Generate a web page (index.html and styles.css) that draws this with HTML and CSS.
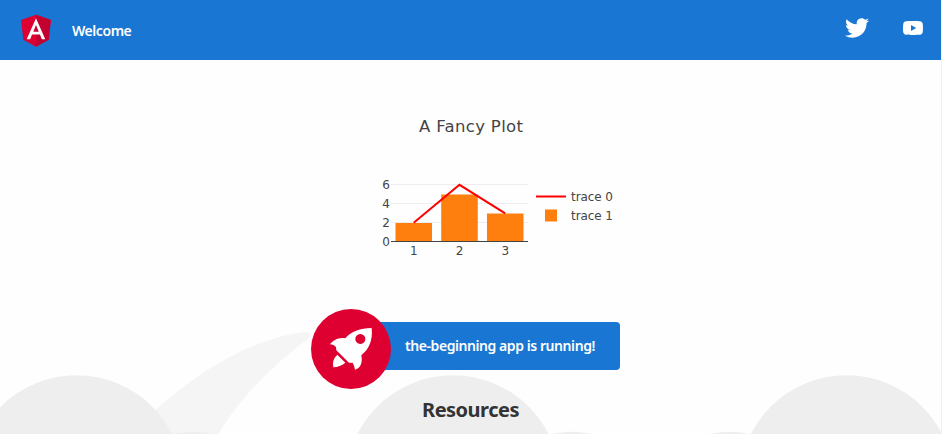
FILE: index.html
```html
<!DOCTYPE html>
<html lang="en">
<head>
<meta charset="utf-8">
<title>Welcome</title>
<link rel="stylesheet" href="styles.css">
</head>
<body>
<div class="page">
  <svg class="scenery" viewBox="0 300 941 134" aria-hidden="true">
    <path fill="#f5f5f5" d="M130 434 C175 389 235 342 302 332.2 Q310 331.400 310.700 335 Q310 338 300 345 C268 370 240 398 218.500 434 Z"/>
    <g fill="#eee">
      <circle cx="194" cy="520" r="88.200"/>
      <circle cx="572" cy="520" r="88.200"/>
      <circle cx="730" cy="520" r="88.200"/>
      <circle cx="76.500" cy="482.500" r="107.200"/>
      <circle cx="453" cy="482.500" r="107.200"/>
      <circle cx="846.500" cy="482.500" r="107.200"/>
    </g>
  </svg>

  <header class="toolbar">
    <svg class="logo" viewBox="0 0 250 250">
      <path fill="#dd0031" d="M125 30 31.900 63.200 46.100 186.300 125 230 203.900 186.300 218.100 63.200z"/>
      <path fill="#c3002f" d="M125 30V230L203.900 186.300 218.100 63.200z"/>
      <path fill="#fff" d="M125 52.100 66.800 182.600H88.500L100.200 153.400H149.600L161.300 182.600H183zM142 135.400H108L125 94.500z"/>
    </svg>
    <span class="welcome">Welcome</span>
    <nav class="social">
      <svg viewBox="0 0 24 24"><path d="M24 4.557c-.883.392-1.832.656-2.828.775 1.017-.609 1.798-1.574 2.165-2.724-.951.564-2.005.974-3.127 1.195-.897-.957-2.178-1.555-3.594-1.555-3.179 0-5.515 2.966-4.797 6.045-4.091-.205-7.719-2.165-10.148-5.144-1.290 2.213-.669 5.108 1.523 6.574-.806-.026-1.566-.247-2.229-.616-.054 2.281 1.581 4.415 3.949 4.890-.693.188-1.452.232-2.224.084.626 1.956 2.444 3.379 4.600 3.419-2.070 1.623-4.678 2.348-7.290 2.040 2.179 1.397 4.768 2.212 7.548 2.212 9.142 0 14.307-7.721 13.995-14.646.962-.695 1.797-1.562 2.457-2.549z"/></svg>
      <svg viewBox="0 0 24 24"><path d="M21.580 7.190c-.23-.86-.91-1.540-1.770-1.770C18.250 5 12 5 12 5s-6.250 0-7.810.42c-.86.23-1.540.91-1.770 1.770C2 8.750 2 12 2 12s0 3.250.42 4.810c.23.86.91 1.540 1.770 1.770C5.750 19 12 19 12 19s6.250 0 7.810-.42c.86-.23 1.540-.91 1.770-1.770C22 15.250 22 12 22 12s0-3.250-.42-4.810zM10 15V9l5.200 3-5.200 3z"/></svg>
    </nav>
  </header>

  <main class="content">
    <svg class="plot" viewBox="311 100 320 170">
      <text class="plot-title" x="471" y="132" text-anchor="middle" textLength="104">A Fancy Plot</text>
      <path stroke="#eee" d="M391 184.500H528M391 203.500H528M391 222.500H528"/>
      <g fill="#ff7f0e">
        <path d="M395.500 223h36.500v18.500h-36.500zM441.200 194.500h36.600v47h-36.600zM487 213.500h36.500v28H487zM545 209.500h12v12h-12z"/>
      </g>
      <path stroke="#444" d="M391 241.500H528"/>
      <path fill="none" stroke="red" stroke-width="2" d="M413.700 222.700 459.500 184.800 505.200 213.300M536 196.500H566"/>
      <g class="ticks">
        <text x="390" y="189" text-anchor="end">6</text>
        <text x="390" y="208" text-anchor="end">4</text>
        <text x="390" y="227" text-anchor="end">2</text>
        <text x="390" y="246" text-anchor="end">0</text>
        <text x="413.700" y="255" text-anchor="middle">1</text>
        <text x="459.500" y="255" text-anchor="middle">2</text>
        <text x="505.200" y="255" text-anchor="middle">3</text>
        <text x="571" y="201" textLength="42">trace 0</text>
        <text x="571" y="220" textLength="42">trace 1</text>
      </g>
    </svg>

    <div class="banner">
      <svg class="rocket" viewBox="33 27 240 240">
        <circle cx="153" cy="147" r="120" fill="#dd0031"/>
        <g fill="#fff">
          <path fill-rule="evenodd" d="M215 84C181 84 151 96 136 115C116 111 99 121 90 133Q103 134 108 142L109 151L147 188L158 188Q163 197 165 209C180 205 189 191 184 166C207 147 219 122 215 84ZM181 102a15 15 0 1 0 .1 0z"/>
          <path d="M112 164 136 188Q120 201 100 202Q95 180 112 164Z"/>
        </g>
      </svg>
      <span class="running">the-beginning app is running!</span>
    </div>
    <h2 class="resources">Resources</h2>
  </main>
</div>
</body>
</html>
```
FILE: styles.css
```css
body {
  margin: 0;
  background: #fefefe;
  color: #333;
  font-family: "Noto Sans", "Open Sans", sans-serif;
  font-size: 14px;
}

.page {
  position: relative;
  box-sizing: border-box;
  height: 434px;
  overflow: hidden;
  border-right: 1px solid #f1f1f1;
}

.scenery {
  position: absolute;
  left: 0;
  bottom: 0;
  width: 941px;
  height: 134px;
}

.toolbar {
  position: relative;
  display: flex;
  align-items: center;
  height: 60px;
  background: #1976d2;
  color: #fff;
  font-weight: 600;
}

.logo {
  width: 40px;
  height: 40px;
  margin: 0 16px;
}

.welcome {
  letter-spacing: -0.45px;
}

.social {
  display: flex;
  gap: 32px;
  margin: 0 16px 4px auto;
}

.social svg {
  width: 24px;
  height: 24px;
  fill: #fff;
}

.content {
  position: relative;
  display: flex;
  flex-direction: column;
  align-items: center;
  padding-top: 40px;
}

.plot {
  width: 320px;
  height: 170px;
  font-family: "DejaVu Sans", sans-serif;
  fill: #444;
}

.plot-title {
  font-size: 16.5px;
}

.ticks {
  font-size: 12px;
}

.banner {
  display: flex;
  align-items: center;
  box-sizing: border-box;
  width: 299px;
  height: 48px;
  margin: 52px 0 0;
  border-radius: 4px;
  background: #1976d2;
  color: #fff;
  font-weight: 600;
}

.rocket {
  flex: none;
  width: 80px;
  height: 80px;
  margin: 6px 14px 0 -10px;
}

.running {
  margin-bottom: 2px;
  white-space: nowrap;
  letter-spacing: -0.43px;
}

.resources {
  margin: 26px 0 0;
  font-size: 20px;
  line-height: 27px;
  font-weight: 700;
  letter-spacing: -0.5px;
}
```
